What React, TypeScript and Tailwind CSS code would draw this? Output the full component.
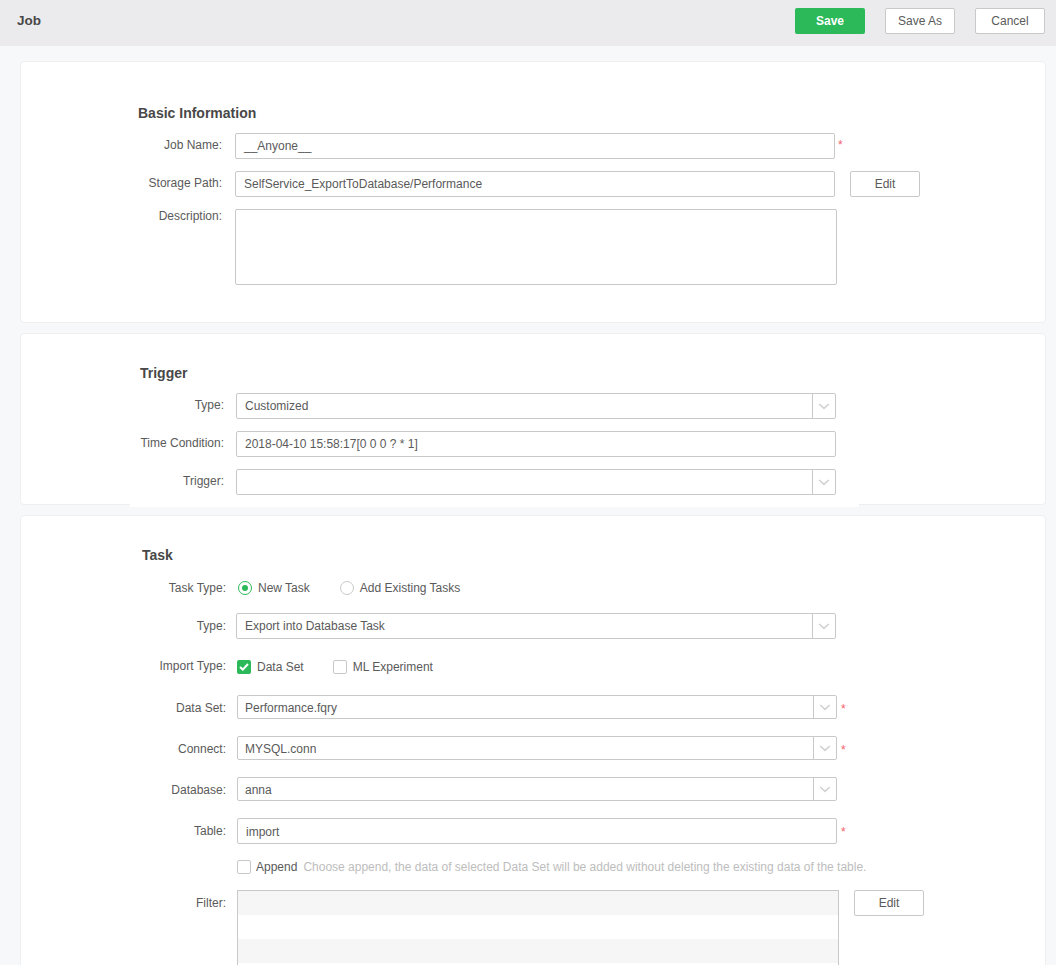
import React from "react";

const Chevron = () => (
  <svg width="12" height="7" viewBox="0 0 12 7" fill="none" stroke="#d2d2d2" strokeWidth="1.6">
    <path d="M1.2 1l4.8 4.4L10.8 1" />
  </svg>
);

function Label({ w, className = "pb-[2px]", children }: { w: string; className?: string; children: React.ReactNode }) {
  return <div className={`${w} ${className} shrink-0 text-right`}>{children}</div>;
}

const Star = ({ className }: { className: string }) => (
  <span className={`${className} text-[12px] leading-none text-[#f4606e]`}>*</span>
);

function Field({ className, children }: { className: string; children?: React.ReactNode }) {
  return (
    <div className={`${className} flex items-center border border-[#c9c9c9] rounded-[2px] bg-white px-[8px] text-[12px] text-[#5a5a5a]`}>
      {children}
    </div>
  );
}

function Select({ className, children }: { className: string; children?: React.ReactNode }) {
  return (
    <div className={`${className} flex items-stretch border border-[#c9c9c9] rounded-[2px] bg-white text-[12px] text-[#5a5a5a]`}>
      <div className="flex-1 flex items-center pl-[8px]">{children}</div>
      <div className="w-[23px] border-l border-[#c9c9c9] flex items-center justify-center">
        <Chevron />
      </div>
    </div>
  );
}

const Btn = ({ className, children }: { className: string; children: React.ReactNode }) => (
  <div className={`${className} flex items-center justify-center border border-[#c9c9c9] rounded-[2px] bg-white text-[12px] text-[#5a5a5a]`}>
    {children}
  </div>
);

const Box = ({ checked }: { checked?: boolean }) =>
  checked ? (
    <span className="block w-[14px] h-[14px] rounded-[2px] bg-[#2bb95a]">
      <span className="flex w-full h-full items-center justify-center">
        <svg width="10" height="8" viewBox="0 0 10 8" fill="none" stroke="#fff" strokeWidth="2">
          <path d="M1 4l2.8 2.6L9 1" />
        </svg>
      </span>
    </span>
  ) : (
    <span className="block w-[14px] h-[14px] rounded-[2px] border border-[#c9c9c9] bg-white" />
  );

const Val = ({ children }: { children: React.ReactNode }) => <span className="pt-[2px] -ml-[1px]">{children}</span>;

export default function App() {
  return (
    <div
      className="h-[965px] overflow-hidden bg-[#f7f8fa] text-[12px] text-[#5a5a5a]"
      style={{ fontFamily: '"Liberation Sans", Arial, sans-serif' }}
    >
      <header className="h-[46px] bg-[#ebebed] flex items-center pl-[17px] pr-[11px]">
        <div className="text-[13.5px] font-bold text-[#484848] flex-1 pb-[4px]">Job</div>
        <div className="flex gap-[20px] pb-[4px]">
          <div className="w-[70px] h-[26px] rounded-[2px] bg-[#2bb95a] text-white font-bold flex items-center justify-center">Save</div>
          <Btn className="w-[70px] h-[26px]">Save As</Btn>
          <Btn className="w-[70px] h-[26px]">Cancel</Btn>
        </div>
      </header>

      <main className="pl-[20px] pr-[10px] pt-[15px] flex flex-col gap-[10px]">
        {/* Basic information */}
        <section className="h-[262px] bg-white border border-[#eeeff1] rounded-[4px] pl-[117px] pt-[43px]">
          <h2 className="text-[14px] leading-[16px] font-bold text-[#484848]">Basic Information</h2>
          <div className="mt-[12px] flex items-center h-[26px]">
            <Label w="w-[84px]">Job Name:</Label>
            <Field className="ml-[13px] w-[600px] h-[26px]">__Anyone__</Field>
            <Star className="ml-[3px] pb-[2px]" />
          </div>
          <div className="mt-[12px] flex items-center h-[26px]">
            <Label w="w-[84px]">Storage Path:</Label>
            <Field className="ml-[13px] w-[600px] h-[26px]">SelfService_ExportToDatabase/Performance</Field>
            <Btn className="ml-[15px] w-[70px] h-[26px]">Edit</Btn>
          </div>
          <div className="mt-[12px] flex items-start">
            <Label w="w-[84px]" className="-mt-[2px]">Description:</Label>
            <Field className="ml-[13px] w-[602px] h-[76px]" />
          </div>
        </section>

        {/* Trigger */}
        <section className="h-[172px] bg-white border border-[#eeeff1] rounded-[4px] pt-[31px]">
          <div className="ml-[109px] w-[729px] h-[142px] bg-white pl-[10px]">
            <h2 className="text-[14px] leading-[16px] font-bold text-[#484848]">Trigger</h2>
            <div className="mt-[12px] flex items-center h-[26px]">
              <Label w="w-[84px]">Type:</Label>
              <Select className="ml-[12px] w-[600px] h-[26px]">Customized</Select>
            </div>
            <div className="mt-[12px] flex items-center h-[26px]">
              <Label w="w-[84px]">Time Condition:</Label>
              <Field className="ml-[12px] w-[600px] h-[26px]">2018-04-10 15:58:17[0 0 0 ? * 1]</Field>
            </div>
            <div className="mt-[12px] flex items-center h-[26px]">
              <Label w="w-[84px]">Trigger:</Label>
              <Select className="ml-[12px] w-[600px] h-[26px]" />
            </div>
          </div>
        </section>

        {/* Task */}
        <section className="h-[470px] bg-white border border-[#eeeff1] rounded-[4px] pl-[121px] pt-[31px]">
          <h2 className="text-[14px] leading-[16px] font-bold text-[#484848]">Task</h2>
          <div className="mt-[17px] flex items-center h-[16px]">
            <Label w="w-[84px]" className="pb-0">Task Type:</Label>
            <span className="ml-[12px] w-[14px] h-[14px] rounded-full border border-[#2bb95a] flex items-center justify-center">
              <span className="w-[6px] h-[6px] rounded-full bg-[#2bb95a]" />
            </span>
            <span className="ml-[6px]">New Task</span>
            <span className="ml-[30px] w-[14px] h-[14px] rounded-full border border-[#c9c9c9]" />
            <span className="ml-[6px]">Add Existing Tasks</span>
          </div>
          <div className="mt-[17px] flex items-center h-[26px]">
            <Label w="w-[84px]" className="pb-0">Type:</Label>
            <Select className="ml-[10px] w-[600px] h-[26px]">Export into Database Task</Select>
          </div>
          <div className="mt-[20px] flex items-center h-[16px]">
            <Label w="w-[84px]">Import Type:</Label>
            <span className="ml-[11px]"><Box checked /></span>
            <span className="ml-[6px] pb-[1px]">Data Set</span>
            <span className="ml-[29px]"><Box /></span>
            <span className="ml-[6px] pb-[1px]">ML Experiment</span>
          </div>
          <div className="mt-[20px] flex items-center h-[24px]">
            <Label w="w-[84px]" className="pt-[2px]">Data Set:</Label>
            <Select className="ml-[11px] w-[600px] h-[24px]"><Val>Performance.fqry</Val></Select>
            <Star className="ml-[4px] pt-[3px]" />
          </div>
          <div className="mt-[17px] flex items-center h-[24px]">
            <Label w="w-[84px]" className="pt-[2px]">Connect:</Label>
            <Select className="ml-[11px] w-[600px] h-[24px]"><Val>MYSQL.conn</Val></Select>
            <Star className="ml-[4px] pt-[3px]" />
          </div>
          <div className="mt-[17px] flex items-center h-[24px]">
            <Label w="w-[84px]" className="pt-[2px]">Database:</Label>
            <Select className="ml-[11px] w-[600px] h-[24px]"><Val>anna</Val></Select>
          </div>
          <div className="mt-[17px] flex items-center h-[26px]">
            <Label w="w-[84px]" className="pb-0">Table:</Label>
            <Field className="ml-[11px] w-[600px] h-[26px]"><span className="pt-[2px]">import</span></Field>
            <Star className="ml-[4px] pt-[2px]" />
          </div>
          <div className="mt-[15px] flex items-center h-[16px] ml-[95px]">
            <Box />
            <span className="ml-[5px]">Append</span>
            <span className="ml-[6px] text-[#bdbdbd]">Choose append, the data of selected Data Set will be added without deleting the existing data of the table.</span>
          </div>
          <div className="mt-[15px] flex items-start">
            <Label w="w-[84px]" className="pt-[4px]">Filter:</Label>
            <div className="ml-[11px] w-[602px] h-[200px] border border-[#c9c9c9]">
              <div className="h-[24px] bg-[#f6f6f6]" />
              <div className="h-[24px] bg-white" />
              <div className="h-[24px] bg-[#f6f6f6]" />
            </div>
            <Btn className="ml-[15px] w-[70px] h-[26px]">Edit</Btn>
          </div>
        </section>
      </main>
    </div>
  );
}
